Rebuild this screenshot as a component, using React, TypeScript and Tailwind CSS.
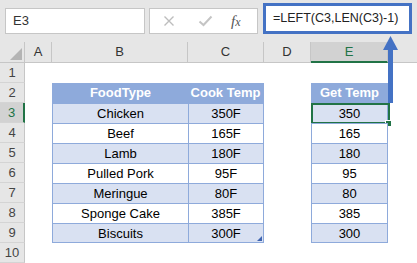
import React from "react";

const rows: [string, string, string][] = [
  ["Chicken", "350F", "350"],
  ["Beef", "165F", "165"],
  ["Lamb", "180F", "180"],
  ["Pulled Pork", "95F", "95"],
  ["Meringue", "80F", "80"],
  ["Sponge Cake", "385F", "385"],
  ["Biscuits", "300F", "300"],
];

const cols = ["A", "B", "C", "D", "E"];

function RowHead({ n, active }: { n: number; active?: boolean }) {
  return (
    <div
      className={
        "flex items-center justify-center border-b border-[#d4d4d4] text-[13px] " +
        (active
          ? "bg-[#d2d2d2] border-r-2 border-r-[#217346] text-[#217346]"
          : "bg-[#e6e6e6] border-r border-r-[#c6c6c6] text-[#444]")
      }
    >
      {n}
    </div>
  );
}

function Empty() {
  return <div className="bg-white" />;
}

export default function App() {
  return (
    <div
      className="relative w-[417px] h-[263px] overflow-hidden bg-white text-black"
      style={{ fontFamily: '"Liberation Sans", Arial, sans-serif' }}
    >
      {/* formula bar */}
      <div className="flex items-start h-[42px] bg-[#e6e6e6]">
        <div className="ml-[5px] mt-[8px] w-[140px] h-[26px] bg-white border border-[#c6c6c6] flex items-center pl-[7px] text-[13px] text-[#333]">
          E3
        </div>
        <div className="ml-[4px] mt-[8px] w-[109px] h-[26px] bg-white border border-[#c6c6c6] flex items-center">
          <svg width="12" height="12" viewBox="0 0 12 12" className="ml-[13px]">
            <path d="M1.5 1.5 L10.5 10.5 M10.5 1.5 L1.5 10.5" stroke="#bdbdbd" strokeWidth="1.4" fill="none" />
          </svg>
          <svg width="15" height="12" viewBox="0 0 15 12" className="ml-[23px]">
            <path d="M1.5 6.5 L5.5 10 L13.5 1.5" stroke="#c4c4c4" strokeWidth="2" fill="none" />
          </svg>
          <span
            className="ml-[18px] text-[15px] italic text-[#555] leading-none"
            style={{ fontFamily: '"Liberation Serif", "Times New Roman", serif' }}
          >
            f<span className="text-[12px]">x</span>
          </span>
        </div>
        <div className="ml-[5px] mt-[3px] w-[149px] h-[31px] bg-white border-[3px] border-[#4472c4] flex items-center pl-[7px] text-[12.5px] text-[#222]">
          =LEFT(C3,LEN(C3)-1)
        </div>
      </div>

      {/* grid */}
      <div className="grid grid-cols-[25px_27px_136px_76px_47px_77px_1fr] grid-rows-[21px_repeat(10,20px)]">
        {/* corner */}
        <div className="relative bg-[#e6e6e6] border-r border-b border-[#c6c6c6]">
          <svg width="25" height="21" className="absolute left-0 top-0">
            <polygon points="22,6 22,18 10,18" fill="#b4b4b4" />
          </svg>
        </div>
        {cols.map((c) =>
          c === "E" ? (
            <div
              key={c}
              className="flex items-center justify-center bg-[#d2d2d2] border-r border-r-[#c6c6c6] border-b-2 border-b-[#217346] text-[13px] text-[#217346]"
            >
              {c}
            </div>
          ) : (
            <div
              key={c}
              className="flex items-center justify-center bg-[#e6e6e6] border-r border-r-[#c6c6c6] border-b border-b-[#c6c6c6] text-[13px] text-[#333]"
            >
              {c}
            </div>
          )
        )}
        <div className="bg-[#e6e6e6] border-b border-[#c6c6c6]" />

        {/* row 1 */}
        <RowHead n={1} />
        <Empty />
        <Empty />
        <Empty />
        <Empty />
        <Empty />
        <Empty />

        {/* row 2 header */}
        <RowHead n={2} />
        <Empty />
        <div className="flex items-center justify-center bg-[#8eaadb] border-l border-[#8eaadb] text-white font-bold text-[13px]">
          FoodType
        </div>
        <div className="flex items-center justify-center bg-[#8eaadb] border-r border-[#8eaadb] text-white font-bold text-[13px]">
          Cook Temp
        </div>
        <Empty />
        <div className="flex items-center justify-center bg-[#8eaadb] text-white font-bold text-[13px]">
          Get Temp
        </div>
        <Empty />

        {rows.map(([f, c, g], i) => {
          const n = i + 3;
          const bg = i % 2 === 0 ? "bg-[#d9e1f2]" : "bg-white";
          const last = i === rows.length - 1;
          return (
            <React.Fragment key={n}>
              <RowHead n={n} active={n === 3} />
              <Empty />
              <div
                className={
                  "flex items-center justify-center pt-[1px] text-[13px] border-l border-t border-[#8eaadb] " +
                  bg +
                  (last ? " border-b" : "")
                }
              >
                {f}
              </div>
              <div
                className={
                  "relative flex items-center justify-center pt-[1px] text-[13px] border-l border-t border-r border-[#8eaadb] " +
                  bg +
                  (last ? " border-b" : "")
                }
              >
                {c}
                {last && (
                  <svg width="6" height="6" className="absolute right-0 bottom-0">
                    <polygon points="5,0 5,5 0,5" fill="#3f64b0" />
                  </svg>
                )}
              </div>
              <Empty />
              <div
                className={
                  "relative flex items-center justify-center pt-[1px] text-[13px] border-l border-t border-r border-[#8eaadb] " +
                  bg +
                  (last ? " border-b" : "")
                }
              >
                {g}
                {n === 3 && (
                  <>
                    <div className="absolute left-[-1px] top-[-1px] right-[-3px] bottom-[-1px] border-2 border-[#217346]" />
                    <div className="absolute right-[-5px] bottom-[-4px] w-[7px] h-[7px] bg-[#217346] border border-white" />
                  </>
                )}
              </div>
              <Empty />
            </React.Fragment>
          );
        })}

        {/* row 10 */}
        <RowHead n={10} />
        <Empty />
        <Empty />
        <Empty />
        <Empty />
        <Empty />
        <Empty />
      </div>

      {/* arrow overlay */}
      <svg width="417" height="263" className="absolute left-0 top-0 pointer-events-none">
        <rect x="388" y="49" width="5" height="54" fill="#4472c4" />
        <polygon points="390.5,36 383,50 398,50" fill="#4472c4" />
      </svg>
    </div>
  );
}
